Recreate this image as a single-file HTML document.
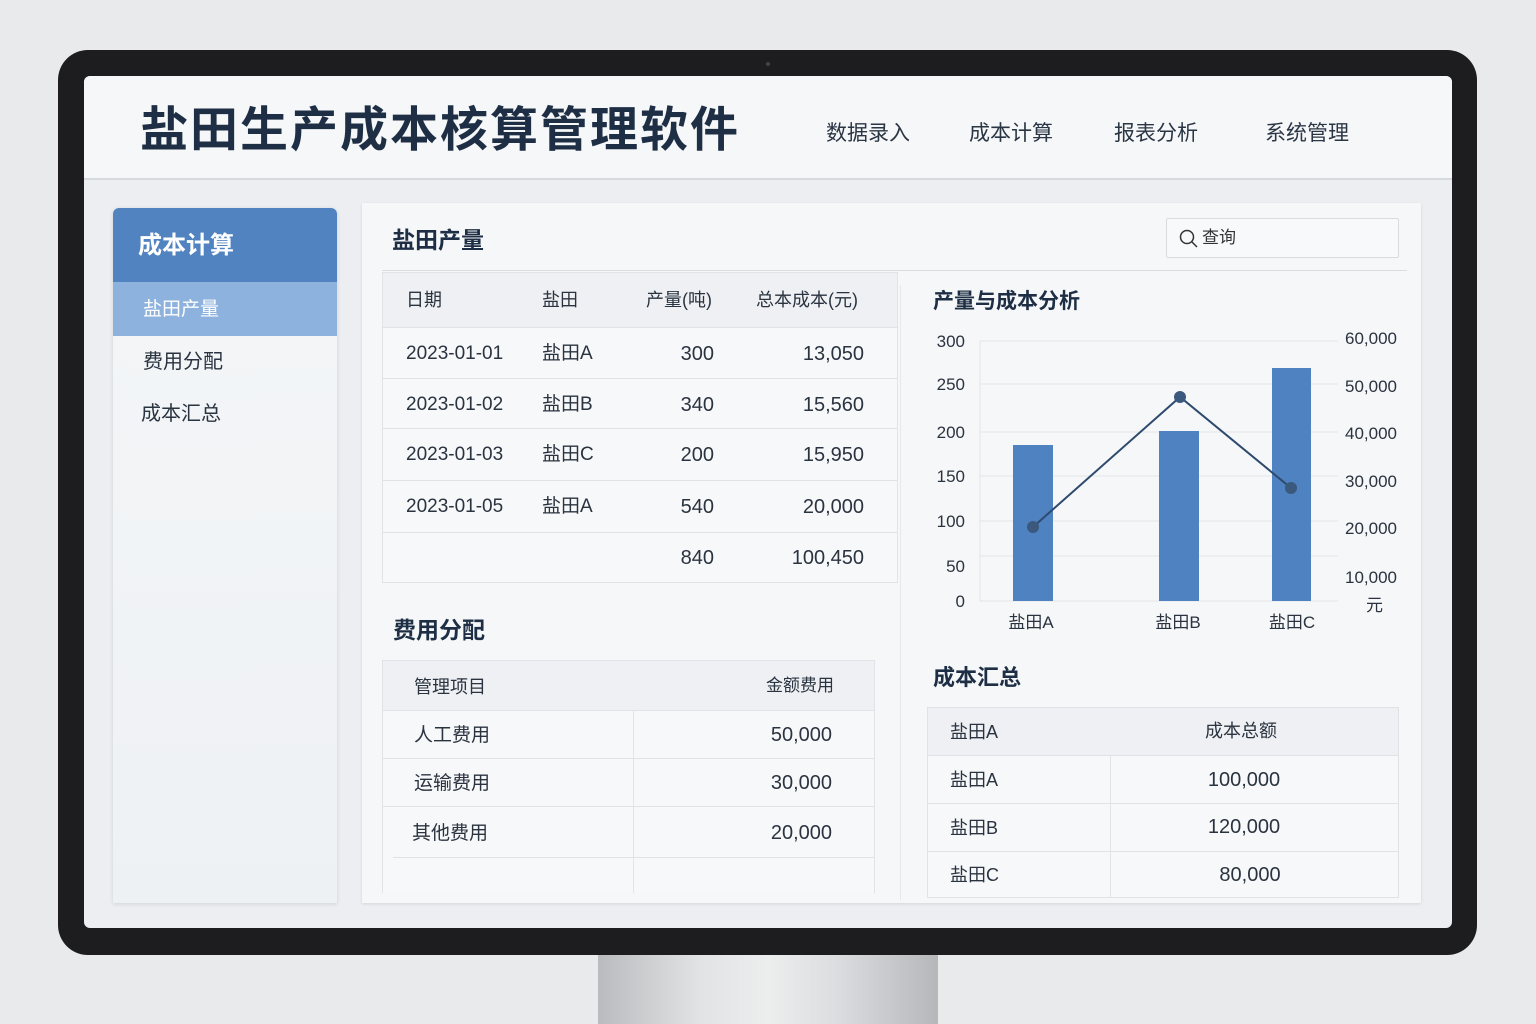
<!DOCTYPE html>
<html><head><meta charset="utf-8"><style>
*{margin:0;padding:0;box-sizing:border-box}
body{width:1536px;height:1024px;background:#e9eaec;position:relative;overflow:hidden;font-family:"Liberation Sans","Noto Sans CJK SC",sans-serif;color:#2a3340}
.a{position:absolute}
.t{position:absolute;white-space:nowrap;line-height:1}
.hl{position:absolute;height:1px;background:#dfe2e6}
.vl{position:absolute;width:1px;background:#e1e4e8}
</style></head><body>
<div class="a" style="left:598px;top:950px;width:340px;height:74px;background:linear-gradient(90deg,#b9bbbe,#e2e3e5 30%,#eceded 50%,#dcdde0 70%,#b5b7ba)"></div>
<div class="a" style="left:58px;top:50px;width:1419px;height:905px;background:#1d1d1f;border-radius:30px"></div>
<div class="a" style="left:766px;top:62px;width:4px;height:4px;border-radius:2px;background:#444"></div>
<div class="a" style="left:84px;top:76px;width:1368px;height:852px;background:#eceef1;border-radius:6px"></div>
<div class="a" style="left:84px;top:76px;width:1368px;height:104px;background:#f6f7f8;border-bottom:2px solid #d6d9dd;border-radius:6px 6px 0 0"></div>
<div class="t" style="left:140px;top:107px;font-size:48px;font-weight:bold;color:#1e2f45;letter-spacing:2px">盐田生产成本核算管理软件</div>
<div class="t" style="left:826px;top:123px;font-size:21px;color:#2b3645">数据录入</div>
<div class="t" style="left:969px;top:123px;font-size:21px;color:#2b3645">成本计算</div>
<div class="t" style="left:1114px;top:123px;font-size:21px;color:#2b3645">报表分析</div>
<div class="t" style="left:1265px;top:123px;font-size:21px;color:#2b3645">系统管理</div>

<div class="a" style="left:113px;top:208px;width:224px;height:695px;background:linear-gradient(#f4f6f8,#eef1f4);box-shadow:0 1px 4px rgba(0,0,0,.12);border-radius:6px 6px 0 0"></div>
<div class="a" style="left:113px;top:208px;width:224px;height:74px;background:#5083c0;border-radius:6px 6px 0 0"></div>
<div class="t" style="left:138px;top:234px;font-size:24px;font-weight:bold;color:#fff">成本计算</div>
<div class="a" style="left:113px;top:282px;width:224px;height:54px;background:#8db2de"></div>
<div class="t" style="left:143px;top:300px;font-size:19px;color:#fff">盐田产量</div>
<div class="t" style="left:143px;top:352px;font-size:20px;color:#2a3340">费用分配</div>
<div class="t" style="left:141px;top:404px;font-size:20px;color:#2a3340">成本汇总</div>

<div class="a" style="left:362px;top:203px;width:1059px;height:700px;background:#f6f7f8;box-shadow:0 1px 3px rgba(0,0,0,.1)"></div>
<div class="t" style="left:392px;top:229px;font-size:23px;font-weight:bold;color:#1e2f45">盐田产量</div>
<div class="a" style="left:1166px;top:218px;width:233px;height:40px;border:1px solid #d8dbdf;background:#f8f9fa;border-radius:2px"></div>
<svg class="a" style="left:1178px;top:228px" width="22" height="22"><circle cx="9" cy="9" r="6.5" fill="none" stroke="#333" stroke-width="1.5"/><line x1="14" y1="14" x2="19" y2="19" stroke="#333" stroke-width="1.5"/></svg>
<div class="t" style="left:1202px;top:229px;font-size:17px;color:#333">查询</div>
<div class="hl" style="left:382px;top:270px;width:1025px;background:#dadde1"></div>

<div class="a" style="left:382px;top:272px;width:516px;height:311px;border:1px solid #e0e3e7;background:#f7f8f9"></div>
<div class="a" style="left:383px;top:273px;width:514px;height:54px;background:#eef0f3"></div>
<div class="t" style="left:406px;top:291px;font-size:18px">日期</div>
<div class="t" style="left:542px;top:291px;font-size:18px">盐田</div>
<div class="t" style="left:646px;top:291px;font-size:18px">产量(吨)</div>
<div class="t" style="left:756px;top:291px;font-size:18px">总本成本(元)</div>
<div class="hl" style="left:383px;top:327px;width:514px"></div>
<div class="hl" style="left:383px;top:378px;width:514px"></div>
<div class="hl" style="left:383px;top:428px;width:514px"></div>
<div class="hl" style="left:383px;top:480px;width:514px"></div>
<div class="hl" style="left:383px;top:532px;width:514px"></div>
<div class="t" style="left:406px;top:344px;font-size:19px">2023-01-01</div><div class="t" style="left:542px;top:344px;font-size:19px">盐田A</div><div class="t" style="left:654px;width:60px;text-align:right;top:344px;font-size:20px">300</div><div class="t" style="left:764px;width:100px;text-align:right;top:344px;font-size:20px">13,050</div>
<div class="t" style="left:406px;top:395px;font-size:19px">2023-01-02</div><div class="t" style="left:542px;top:395px;font-size:19px">盐田B</div><div class="t" style="left:654px;width:60px;text-align:right;top:395px;font-size:20px">340</div><div class="t" style="left:764px;width:100px;text-align:right;top:395px;font-size:20px">15,560</div>
<div class="t" style="left:406px;top:445px;font-size:19px">2023-01-03</div><div class="t" style="left:542px;top:445px;font-size:19px">盐田C</div><div class="t" style="left:654px;width:60px;text-align:right;top:445px;font-size:20px">200</div><div class="t" style="left:764px;width:100px;text-align:right;top:445px;font-size:20px">15,950</div>
<div class="t" style="left:406px;top:497px;font-size:19px">2023-01-05</div><div class="t" style="left:542px;top:497px;font-size:19px">盐田A</div><div class="t" style="left:654px;width:60px;text-align:right;top:497px;font-size:20px">540</div><div class="t" style="left:764px;width:100px;text-align:right;top:497px;font-size:20px">20,000</div>
<div class="t" style="left:654px;width:60px;text-align:right;top:548px;font-size:20px">840</div><div class="t" style="left:764px;width:100px;text-align:right;top:548px;font-size:20px">100,450</div>

<div class="vl" style="left:900px;top:285px;height:615px;background:#e6e8eb"></div>

<div class="t" style="left:393px;top:619px;font-size:23px;font-weight:bold;color:#1e2f45">费用分配</div>
<div class="a" style="left:382px;top:660px;width:493px;height:233px;border:1px solid #e0e3e7;border-bottom:none;background:#f7f8f9"></div>
<div class="a" style="left:383px;top:661px;width:491px;height:49px;background:#eef0f3"></div>
<div class="vl" style="left:633px;top:710px;height:183px"></div>
<div class="hl" style="left:383px;top:710px;width:491px"></div>
<div class="hl" style="left:383px;top:758px;width:491px"></div>
<div class="hl" style="left:383px;top:806px;width:491px"></div>
<div class="hl" style="left:393px;top:857px;width:481px"></div>
<div class="t" style="left:414px;top:678px;font-size:18px">管理项目</div><div class="t" style="left:766px;top:677px;font-size:17px">金额费用</div>
<div class="t" style="left:414px;top:726px;font-size:19px">人工费用</div><div class="t" style="left:732px;width:100px;text-align:right;top:725px;font-size:20px">50,000</div>
<div class="t" style="left:414px;top:774px;font-size:19px">运输费用</div><div class="t" style="left:732px;width:100px;text-align:right;top:773px;font-size:20px">30,000</div>
<div class="t" style="left:412px;top:824px;font-size:19px">其他费用</div><div class="t" style="left:732px;width:100px;text-align:right;top:823px;font-size:20px">20,000</div>

<div class="t" style="left:933px;top:291px;font-size:21px;font-weight:bold;color:#1e2f45">产量与成本分析</div>
<svg class="a" style="left:920px;top:320px" width="490" height="320" font-family="Liberation Sans" font-size="17" fill="#2a3340">
<g stroke="#e2e5e8" stroke-width="1">
<line x1="60" y1="21" x2="418" y2="21"/><line x1="60" y1="64" x2="418" y2="64"/><line x1="60" y1="112" x2="418" y2="112"/><line x1="60" y1="156" x2="418" y2="156"/><line x1="60" y1="201" x2="418" y2="201"/><line x1="60" y1="236" x2="418" y2="236"/><line x1="60" y1="281" x2="418" y2="281"/><line x1="60" y1="21" x2="60" y2="281"/>
</g>
<g text-anchor="end"><text x="45" y="27">300</text><text x="45" y="70">250</text><text x="45" y="118">200</text><text x="45" y="162">150</text><text x="45" y="207">100</text><text x="45" y="252">50</text><text x="45" y="287">0</text></g>
<g text-anchor="end"><text x="477" y="24">60,000</text><text x="477" y="72">50,000</text><text x="477" y="119">40,000</text><text x="477" y="167">30,000</text><text x="477" y="214">20,000</text><text x="477" y="263">10,000</text></g>
<text x="446" y="291">元</text>
<rect x="93" y="125" width="40" height="156" fill="#4f82c0"/>
<rect x="239" y="111" width="40" height="170" fill="#4f82c0"/>
<rect x="352" y="48" width="39" height="233" fill="#4f82c0"/>
<polyline points="113,207 260,77 371,168" fill="none" stroke="#2e4a6e" stroke-width="2"/>
<circle cx="113" cy="207" r="6" fill="#3b587d"/><circle cx="260" cy="77" r="6" fill="#3b587d"/><circle cx="371" cy="168" r="6" fill="#3b587d"/>
<g text-anchor="middle"><text x="111" y="308">盐田A</text><text x="258" y="308">盐田B</text><text x="372" y="308">盐田C</text></g>
</svg>

<div class="t" style="left:933px;top:667px;font-size:22px;font-weight:bold;color:#1e2f45">成本汇总</div>
<div class="a" style="left:927px;top:707px;width:472px;height:191px;border:1px solid #dfe2e6;background:#f7f8f9"></div>
<div class="a" style="left:928px;top:708px;width:470px;height:47px;background:#eef0f3"></div>
<div class="vl" style="left:1110px;top:755px;height:142px"></div>
<div class="hl" style="left:928px;top:755px;width:470px"></div>
<div class="hl" style="left:928px;top:803px;width:470px"></div>
<div class="hl" style="left:928px;top:851px;width:470px"></div>
<div class="t" style="left:950px;top:723px;font-size:18px">盐田A</div><div class="t" style="left:1205px;top:722px;font-size:18px">成本总额</div>
<div class="t" style="left:950px;top:771px;font-size:18px">盐田A</div><div class="t" style="left:1184px;width:120px;text-align:center;top:770px;font-size:20px">100,000</div>
<div class="t" style="left:950px;top:819px;font-size:18px">盐田B</div><div class="t" style="left:1184px;width:120px;text-align:center;top:817px;font-size:20px">120,000</div>
<div class="t" style="left:950px;top:866px;font-size:18px">盐田C</div><div class="t" style="left:1190px;width:120px;text-align:center;top:865px;font-size:20px">80,000</div>
</body></html>
